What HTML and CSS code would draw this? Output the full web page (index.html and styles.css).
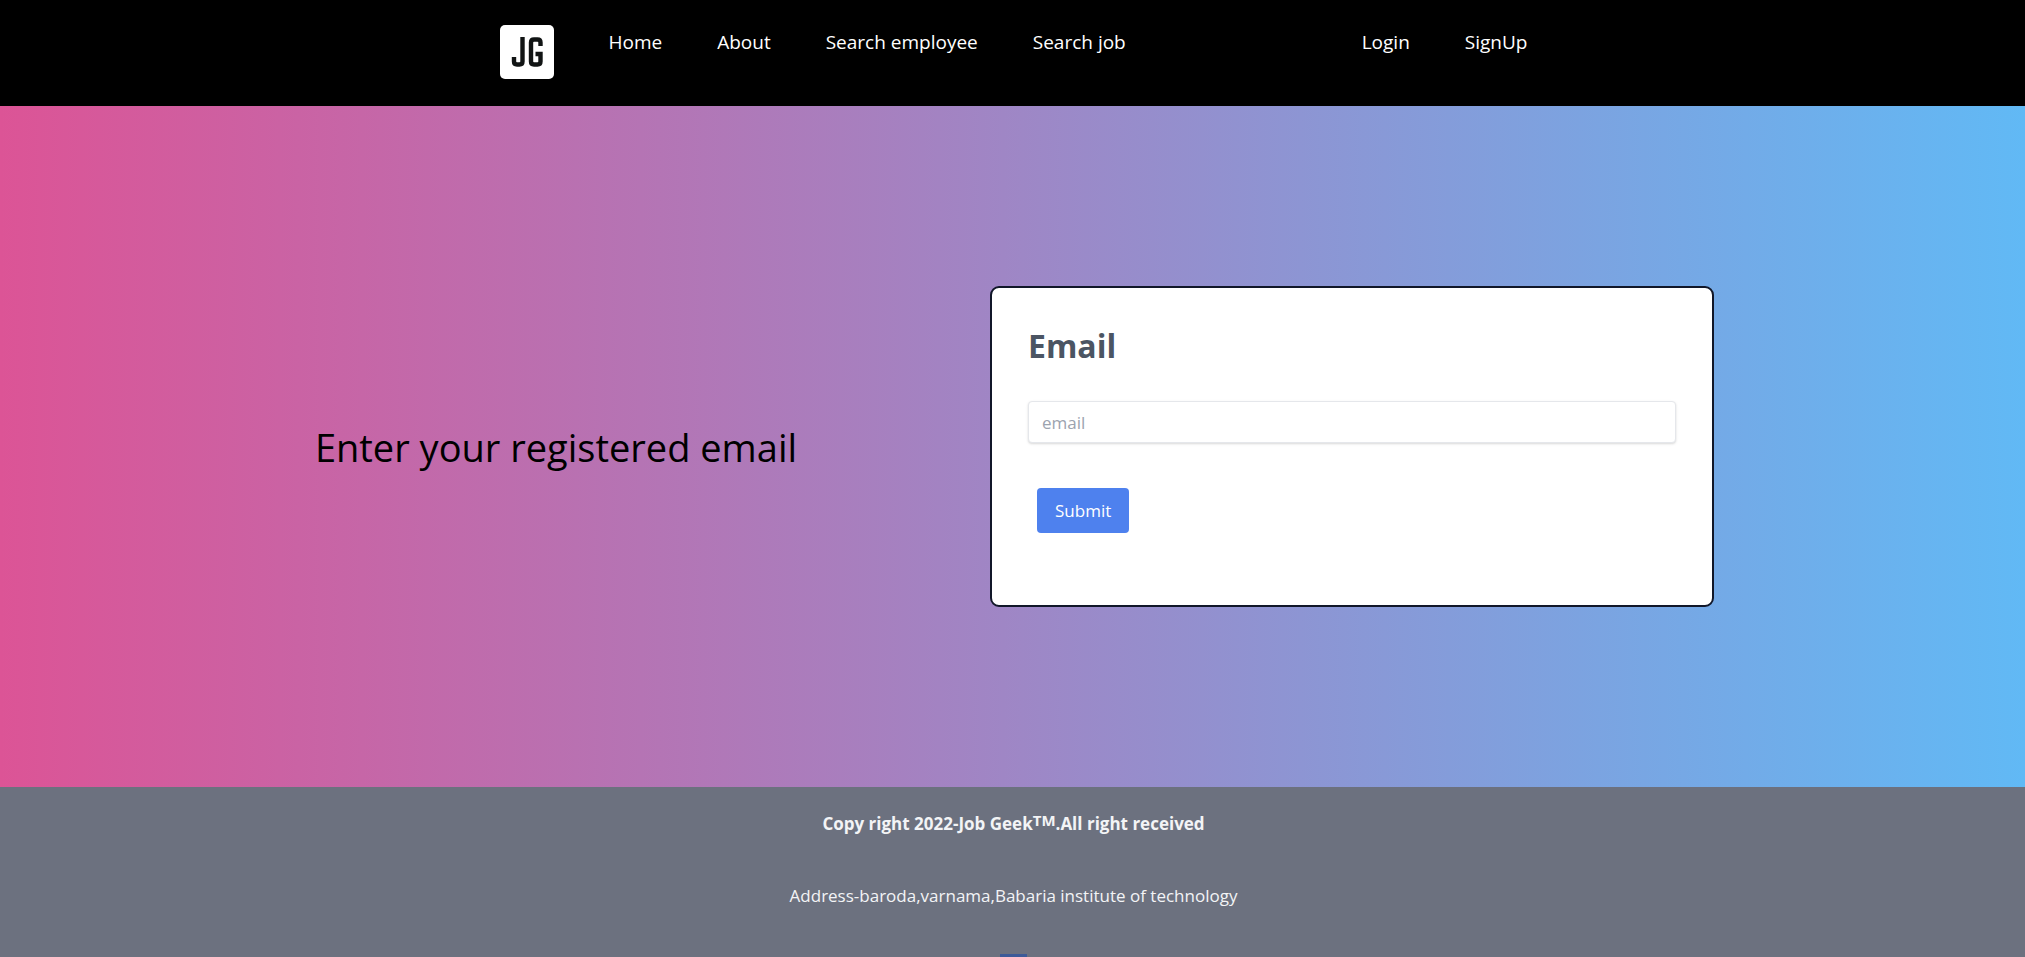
FILE: index.html
```html
<!DOCTYPE html>
<html lang="en">
<head>
<meta charset="utf-8">
<title>Job Geek</title>
<link rel="stylesheet" href="styles.css">
</head>
<body>
<header class="header">
  <nav class="nav">
    <a class="logo" href="#" aria-label="Job Geek">
      <svg viewBox="0 0 54 54" width="54" height="54" fill="none" stroke="#111414" stroke-width="4.4">
        <path d="M22.500 12V36.500Q22.500 39.500 19.500 39.500H17Q14 39.500 14 36.500V32"/>
        <path d="M40.500 21V17.500Q40.500 14.500 37.500 14.500H34Q31 14.500 31 17.500V36.500Q31 39.500 34 39.500H37.500Q40.500 39.500 40.500 36.500V29H35.500"/>
      </svg>
    </a>
    <a class="link" href="#">Home</a>
    <a class="link" href="#">About</a>
    <a class="link" href="#">Search employee</a>
    <a class="link" href="#">Search job</a>
    <div class="account">
      <a class="link" href="#">Login</a>
      <a class="link" href="#">SignUp</a>
    </div>
  </nav>
</header>
<main class="hero">
  <div class="content">
    <h1 class="title">Enter your registered email</h1>
    <form class="card">
      <label class="label" for="email">Email</label>
      <input class="input" id="email" type="email" placeholder="email">
      <button class="submit" type="submit">Submit</button>
    </form>
  </div>
</main>
<footer class="footer">
  <p class="copyright">Copy right 2022-Job Geek<sup class="mark">TM</sup>.All right received</p>
  <p class="address">Address-baroda,varnama,Babaria institute of technology</p>
  <a class="social" href="#" aria-label="Facebook">
    <svg viewBox="0 0 27 27" width="27" height="27"><path fill="#3d5a98" d="M0 0h27v27h-8V17h3l1-4h-4v-3q0-2 2-2h2V4h-4q-5 0-5 5v4h-3v4h3v10H0z"/></svg>
  </a>
</footer>
</body>
</html>
```
FILE: styles.css
```css
* {
  box-sizing: border-box;
  margin: 0;
}

body {
  min-height: 100vh;
  font-family: "Segoe UI", "Open Sans", "Noto Sans", sans-serif;
  font-size: 17px;
  line-height: 27px;
  background: #6c717f;
}

a {
  color: inherit;
  text-decoration: none;
}

.header {
  padding: 25px 16px 27px 18px;
  background: #000;
}

.nav {
  display: flex;
  align-items: flex-start;
  gap: 55px;
  max-width: 1028px;
  margin: 0 auto;
}

.logo {
  display: block;
  width: 54px;
  height: 54px;
  border-radius: 5px;
  background: #fff;
}

.logo svg {
  display: block;
}

.link {
  padding-top: 4px;
  color: #fff;
  font-size: 19px;
  white-space: nowrap;
}

.account {
  display: flex;
  gap: 55px;
  margin-left: auto;
}

.hero {
  padding: 180px 18px;
  background: linear-gradient(to right, #dc5496, #61b9f5);
}

.content {
  display: grid;
  grid-template-columns: 490fr 724fr;
  align-items: center;
  gap: 189px;
  max-width: 1403px;
  margin: 0 auto;
}

.title {
  color: #000;
  font-size: 38px;
  font-weight: 400;
  line-height: 54px;
  text-align: center;
}

.card {
  display: flex;
  flex-direction: column;
  align-items: flex-start;
  padding: 36px;
  border: 2px solid #111729;
  border-radius: 9px;
  background: #fff;
}

.label {
  margin-bottom: 33px;
  color: #4b5563;
  font-size: 32px;
  font-weight: 700;
  line-height: 44px;
}

.input {
  width: 100%;
  height: 42px;
  margin-bottom: 45px;
  padding: 0 13px;
  border: 1px solid #e5e7eb;
  border-radius: 4px;
  box-shadow: 0 1px 3px rgba(0, 0, 0, 0.1), 0 1px 2px rgba(0, 0, 0, 0.06);
  font: inherit;
}

.input::placeholder {
  color: #9ca3af;
}

.submit {
  height: 45px;
  margin: 0 0 36px 9px;
  padding: 0 18px;
  border: 0;
  border-radius: 4px;
  background: #4e81ee;
  color: #fff;
  font: inherit;
}

.footer {
  display: flex;
  flex-direction: column;
  align-items: center;
  height: 170px;
  padding: 23px 16px 0 18px;
  overflow: hidden;
  color: #f3f4f6;
  background: #6c717f;
}

.copyright {
  margin-bottom: 45px;
  font-weight: 700;
}

.mark {
  font-size: 15px;
  line-height: 0;
  vertical-align: 4px;
}

.address {
  margin-bottom: 45px;
}

.social {
  display: block;
}

.social svg {
  display: block;
}
```
